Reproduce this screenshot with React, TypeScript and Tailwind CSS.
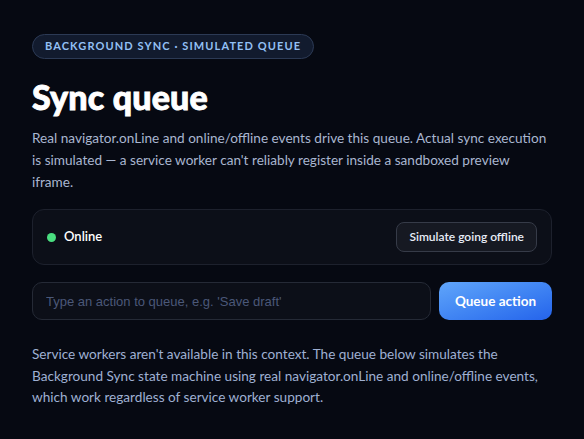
import React from "react";

export default function App() {
  return (
    <div className="min-h-[439px] w-full bg-[#060912] px-8 pt-8 pb-8" style={{ fontFamily: "Lato, 'Noto Sans', sans-serif" }}>
      <div className="inline-flex h-[25px] items-center rounded-full border border-[#2c3a55] bg-[#121b2e] px-3 text-[11px] font-bold uppercase tracking-[0.1em] text-[#93c0f5]">
        Background Sync · Simulated queue
      </div>
      <h1 className="mt-[19px] text-[34px] font-black leading-[1.1] tracking-[0.005em] text-white [-webkit-text-stroke:0.9px_white]">
        Sync queue
      </h1>
      <p className="mt-3 text-[13.6px] leading-[22px] text-[#a9b6d0]">
        Real navigator.onLine and online/offline events drive this queue. Actual sync execution is simulated — a service
        worker can't reliably register inside a sandboxed preview iframe.
      </p>

      <div className="mt-4 flex items-center justify-between rounded-xl border border-[#1d212d] bg-[#0c0f18] px-[14px] py-3">
        <div className="flex items-center gap-2">
          <span className="h-[9px] w-[9px] rounded-full bg-[#4ade80]" />
          <span className="text-[13px] font-semibold text-white">Online</span>
        </div>
        <button className="h-[30px] rounded-lg border border-[#363b48] bg-[#161922] px-3 text-[12px] font-semibold text-[#e8edf7]">
          Simulate going offline
        </button>
      </div>

      <div className="mt-[17px] flex gap-2">
        <input
          className="h-[38px] min-w-0 flex-1 rounded-[10px] border border-[#252a36] bg-[#0c0f18] px-[13px] text-[13px] text-white outline-none placeholder:text-[#4b5878]"
          style={{ fontFamily: "'Liberation Sans', Arial, sans-serif" }}
          placeholder="Type an action to queue, e.g. 'Save draft'"
        />
        <button className="h-[38px] w-[113px] rounded-[10px] bg-gradient-to-br from-[#60a5fa] to-[#2563eb] text-[13.5px] font-bold text-white">
          Queue action
        </button>
      </div>

      <p className="mt-6 text-[13.6px] leading-[21.5px] text-[#9fb0d2]">
        Service workers aren't available in this context. The queue below simulates the Background Sync state machine
        using real navigator.onLine and online/offline events, which work regardless of service worker support.
      </p>
    </div>
  );
}
